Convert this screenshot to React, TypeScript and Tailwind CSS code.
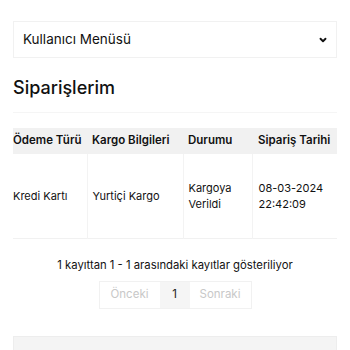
import { ChevronDown } from 'lucide-react';

const font = { fontFamily: 'Inter, "Noto Sans", sans-serif' };

export default function App() {
  return (
    <div className="min-h-screen bg-white px-[13px] pt-[21px] text-[#111]" style={font}>
      <div className="flex items-center justify-between h-[37px] border border-[#f1f1f1] pl-[9px] pr-[8px]">
        <span className="text-[13.5px]">Kullanıcı Menüsü</span>
        <ChevronDown className="w-[10px] h-[10px]" strokeWidth={4.5} />
      </div>

      <h2 className="mt-[16px] text-[18px] font-medium leading-[28px]">Siparişlerim</h2>

      <div className="mt-[10px] border-t border-[#f5f5f5]" />

      <table className="mt-[15px] w-full table-fixed border-collapse whitespace-nowrap">
        <thead>
          <tr className="bg-[#f1f1f1] h-[26px] text-[11.5px]">
            <th className="w-[74px] text-left font-semibold pl-0">Ödeme Türü</th>
            <th className="w-[96px] text-left font-semibold pl-[5px]">Kargo Bilgileri</th>
            <th className="w-[69px] text-left font-semibold pl-[5px]">Durumu</th>
            <th className="text-left font-semibold pl-[6px]">Sipariş Tarihi</th>
          </tr>
        </thead>
        <tbody>
          <tr className="h-[84px] border-b border-[#f1f1f1] leading-[16px] text-[11px]">
            <td className="align-middle">Kredi Kartı</td>
            <td className="align-middle pl-[5px] border-l border-[#f3f3f3]">Yurtiçi Kargo</td>
            <td className="align-middle pl-[5px] border-l border-[#f3f3f3]">
              Kargoya
              <br />
              Verildi
            </td>
            <td className="align-middle pl-[6px] border-l border-[#f3f3f3]">
              08-03-2024
              <br />
              22:42:09
            </td>
          </tr>
        </tbody>
      </table>

      <p className="mt-[18px] text-center text-[11.3px] leading-[16px]">1 kayıttan 1 - 1 arasındaki kayıtlar gösteriliyor</p>

      <div className="mt-[8px] flex justify-center">
        <div className="flex h-[28px] border border-[#f1f1f1] text-[11.5px]">
          <span className="w-[60px] flex items-center justify-center text-[#c8c8c8]">Önceki</span>
          <span className="w-[30px] flex items-center justify-center bg-[#f5f5f5] text-[#222]">1</span>
          <span className="w-[61px] flex items-center justify-center text-[#c8c8c8]">Sonraki</span>
        </div>
      </div>

      <div className="mt-[27px] h-[20px] bg-[#f4f4f4] border border-[#ededed]" />
    </div>
  );
}
